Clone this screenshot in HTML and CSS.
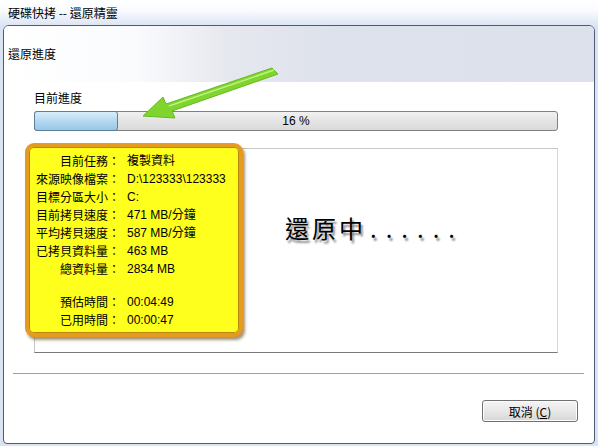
FILE: index.html
```html
<!DOCTYPE html>
<html lang="zh-Hant">
<head>
  <meta charset="UTF-8" />
  <title>硬碟快拷 -- 還原精靈</title>
  <link rel="stylesheet" href="styles.css">
</head>
<body>
  <div class="title">硬碟快拷 -- 還原精靈</div>
  <div class="panel">
    <div class="head">還原進度</div>
    <div class="content">
      <div class="label">目前進度</div>
      <div class="bar">
        <div class="fill" style="width: 16%"></div>
        <span class="pct">16 %</span>
      </div>
      <div class="frame">
        <div class="info">
          <div class="row"><span class="k">目前任務：</span><span class="v">複製資料</span></div>
          <div class="row"><span class="k">來源映像檔案：</span><span class="v">D:\123333\123333</span></div>
          <div class="row"><span class="k">目標分區大小：</span><span class="v">C:</span></div>
          <div class="row"><span class="k">目前拷貝速度：</span><span class="v">471 MB/分鐘</span></div>
          <div class="row"><span class="k">平均拷貝速度：</span><span class="v">587 MB/分鐘</span></div>
          <div class="row"><span class="k">已拷貝資料量：</span><span class="v">463 MB</span></div>
          <div class="row"><span class="k">總資料量：</span><span class="v">2834 MB</span></div>
          <div class="row gap"><span class="k">預估時間：</span><span class="v">00:04:49</span></div>
          <div class="row"><span class="k">已用時間：</span><span class="v">00:00:47</span></div>
        </div>
        <div class="status">還原中<span class="dots">......</span></div>
      </div>
    </div>
    <div class="sep"></div>
    <div class="actions">
      <button class="btn">取消 (<u>C</u>)</button>
    </div>
    <svg class="arrow" width="150" height="60" viewBox="0 0 150 60">
      <polygon points="137,3 143,9 37,46 40,53 8,51 28,32 31,39" fill="#7fd52e" stroke="#68b820" stroke-width="1"/>
      <line x1="139" y1="5" x2="34" y2="41" stroke="#bff27f" stroke-width="1.5"/>
    </svg>
  </div>
</body>
</html>
```

FILE: styles.css
```css
/* dialog */
body {
  margin: 0;
  width: 598px;
  height: 446px;
  background: #dae3f1;
  font-family: "Noto Sans CJK TC", "Liberation Sans", sans-serif;
  font-size: 12px;
  color: #000;
  overflow: hidden;
}
.title {
  height: 25px;
  line-height: 25px;
  padding-left: 8px;
  background: linear-gradient(#ffffff, #fafcff 40%, #dde6f4);
}
.panel {
  position: relative;
  margin: 0 3px 0 3px;
  height: 417px;
  border: 1px solid #4d5b78;
  border-radius: 6px 6px 4px 4px;
  background: #fff;
  overflow: hidden;
}
.head {
  height: 56px;
  box-sizing: border-box;
  padding: 20px 0 0 4px;
  line-height: 16px;
  background: linear-gradient(to right, #ffffff 0%, #fafbfd 22%, #e6e8ef 38%, #dee2ec 55%, #dde1eb 100%);
}
.content {
  padding: 0 36px 0 30px;
}
.label {
  margin-top: 8px;
  line-height: 16px;
}
.bar {
  position: relative;
  margin-top: 5px;
  height: 20px;
  box-sizing: border-box;
  border: 1px solid #808080;
  border-radius: 3px;
  background: linear-gradient(#f1f1f1, #e4e4e4 50%, #dadada);
}
.fill {
  box-sizing: border-box;
  border: 1px solid #5e7f9b;
  border-radius: 3px;
  margin: -1px 0 0 -1px;
  height: 20px;
  background: linear-gradient(#d9eefb, #b7dbf2 45%, #98c6e6);
}
.pct {
  position: absolute;
  left: 0;
  right: 0;
  top: 0;
  line-height: 18px;
  text-align: center;
  font-family: "Liberation Sans", sans-serif;
}
.frame {
  display: flex;
  align-items: flex-start;
  margin-top: 17px;
  height: 205px;
  box-sizing: border-box;
  border: 1px solid #c8c8c8;
  border-bottom-color: #7a7a7a;
  border-right-color: #d8d8d8;
}
.info {
  width: 218px;
  height: 194px;
  margin: -6px 0 0 -10px;
  box-sizing: border-box;
  padding: 5px 0 0 0;
  background: #ffff1e;
  border: 4px solid #e49b1f;
  border-radius: 9px;
  box-shadow: 2px 3px 3px rgba(90, 60, 0, 0.55), inset 0 0 0 1px #b8860b;
}
.row {
  display: flex;
  line-height: 18px;
}
.row.gap {
  margin-top: 15px;
}
.k {
  width: 91px;
  text-align: right;
  white-space: nowrap;
}
.v {
  margin-left: 7px;
  font-family: "Liberation Sans", "Noto Sans CJK TC", sans-serif;
}
.status {
  margin: 61px 0 0 42px;
  font-size: 24px;
  font-weight: 400;
  letter-spacing: 3px;
  text-shadow: 2px 3px 2px #8c8c8c;
}
.dots {
  letter-spacing: 9px;
  margin-left: 4px;
}
.sep {
  margin: 20px 10px 0 9px;
  border-top: 1px solid #a0a0a0;
}
.actions {
  display: flex;
  justify-content: flex-end;
  margin: 26px 16px 0 0;
}
.btn {
  width: 96px;
  height: 22px;
  padding: 0;
  font-family: "Noto Sans CJK TC", "Liberation Sans", sans-serif;
  font-size: 12px;
  border: 1px solid #707070;
  border-radius: 3px;
  background: linear-gradient(#f4f4f4, #e8e8e8 50%, #d6d6d6);
  box-shadow: inset 0 0 0 1px #fcfcfc;
}
.arrow {
  position: absolute;
  left: 131px;
  top: 39px;
}
```
